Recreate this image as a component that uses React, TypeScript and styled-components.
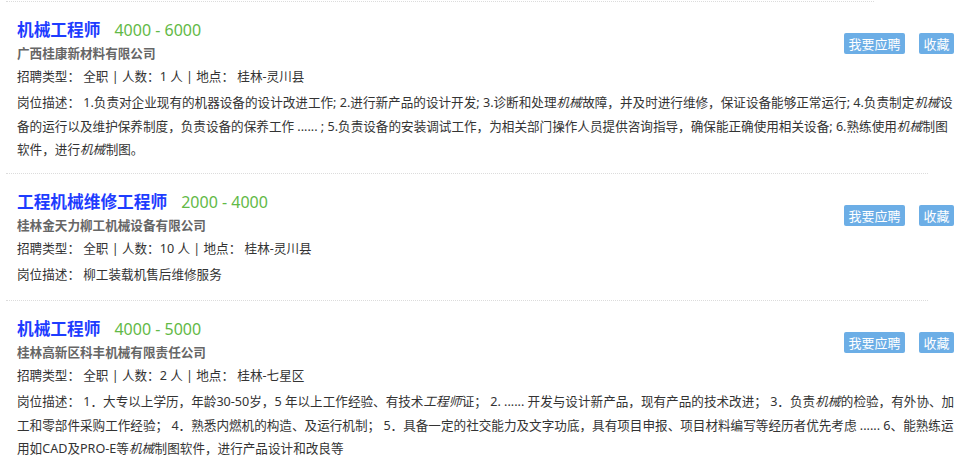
import React from "react";
import styled, { createGlobalStyle } from "styled-components";

const Global = createGlobalStyle`
  html, body { margin: 0; padding: 0; background: #fff; }
  body {
    font-family: "Noto Sans", "Noto Sans CJK SC", sans-serif;
    color: #333;
  }
`;

const Page = styled.div`
  padding: 1px 21px 0 6px;
`;

const Divider = styled.div<{ $width: number }>`
  width: ${(p) => p.$width}px;
  height: 0;
  border-top: 1px dotted #dcdcdc;
`;

const Item = styled.div<{ $bottom: number }>`
  padding: 15px 0 ${(p) => p.$bottom}px 11px;
`;

const Head = styled.div`
  display: flex;
  align-items: flex-start;
  justify-content: space-between;
`;

const Info = styled.div`
  display: flex;
  flex-direction: column;
`;

const TitleRow = styled.div`
  display: flex;
  align-items: baseline;
  gap: 14px;
  height: 26px;
  line-height: 26px;
`;

const Title = styled.a`
  font-size: 16.7px;
  font-weight: 700;
  color: #1e3cff;
  text-decoration: none;
`;

const Salary = styled.span`
  font-size: 16px;
  color: #62b946;
`;

const Company = styled.div`
  font-size: 12.6px;
  font-weight: 700;
  color: #666;
  line-height: 22px;
`;

const Meta = styled.div`
  font-size: 12.6px;
  line-height: 24px;
  color: #333;
`;

const Actions = styled.div`
  display: flex;
  gap: 14px;
  margin-top: 16px;
  margin-right: 2px;
`;

const Btn = styled.button`
  height: 21px;
  padding: 0 4.5px;
  border: none;
  border-radius: 2px;
  background: #6caee6;
  color: #fff;
  font-family: "Noto Sans CJK SC", sans-serif;
  font-size: 13px;
  line-height: 21px;
  cursor: pointer;
`;

const Desc = styled.div`
  margin-top: 2px;
  font-size: 12.6px;
  line-height: 23.5px;
  color: #333;
  word-break: break-all;
`;

const Em = styled.em`
  font-style: italic;
  margin-right: 0.5px;
`;

type Job = {
  title: string;
  salary: string;
  company: string;
  count: string;
  place: string;
  desc: React.ReactNode;
  bottom: number;
};

const jobs: Job[] = [
  {
    title: "机械工程师",
    salary: "4000 - 6000",
    company: "广西桂康新材料有限公司",
    count: "1",
    place: "桂林-灵川县",
    bottom: 11,
    desc: (
      <>
        1.负责对企业现有的机器设备的设计改进工作; 2.进行新产品的设计开发; 3.诊断和处理<Em>机械</Em>故障，并及时进行维修，保证设备能够正常运行; 4.负责制定<Em>机械</Em>设备的运行以及维护保养制度，负责设备的保养工作 ...... ; 5.负责设备的安装调试工作，为相关部门操作人员提供咨询指导，确保能正确使用相关设备; 6.熟练使用<Em>机械</Em>制图软件，进行<Em>机械</Em>制图。
      </>
    ),
  },
  {
    title: "工程机械维修工程师",
    salary: "2000 - 4000",
    company: "桂林金天力柳工机械设备有限公司",
    count: "10",
    place: "桂林-灵川县",
    bottom: 14,
    desc: <>柳工装载机售后维修服务</>,
  },
  {
    title: "机械工程师",
    salary: "4000 - 5000",
    company: "桂林高新区科丰机械有限责任公司",
    count: "2",
    place: "桂林-七星区",
    bottom: 13,
    desc: (
      <>
        1．大专以上学历，年龄30-50岁，5 年以上工作经验、有技术<Em>工程师</Em>证； 2. ...... 开发与设计新产品，现有产品的技术改进； 3．负责<Em>机械</Em>的检验，有外协、加工和零部件采购工作经验； 4．熟悉内燃机的构造、及运行机制； 5．具备一定的社交能力及文字功底，具有项目申报、项目材料编写等经历者优先考虑 ...... 6、能熟练运用如CAD及PRO-E等<Em>机械</Em>制图软件，进行产品设计和改良等
      </>
    ),
  },
];

export default function App() {
  return (
    <>
      <Global />
      <Page>
        {jobs.map((j, i) => (
          <React.Fragment key={i}>
            <Divider $width={i === 0 ? 868 : 922} />
            <Item $bottom={j.bottom}>
              <Head>
                <Info>
                  <TitleRow>
                    <Title href="#">{j.title}</Title>
                    <Salary>{j.salary}</Salary>
                  </TitleRow>
                  <Company>{j.company}</Company>
                  <Meta>
                    招聘类型：&nbsp;全职 | 人数：{j.count} 人 | 地点：&nbsp;{j.place}
                  </Meta>
                </Info>
                <Actions>
                  <Btn>我要应聘</Btn>
                  <Btn>收藏</Btn>
                </Actions>
              </Head>
              <Desc>
                岗位描述：&nbsp;{j.desc}
              </Desc>
            </Item>
          </React.Fragment>
        ))}
      </Page>
    </>
  );
}
